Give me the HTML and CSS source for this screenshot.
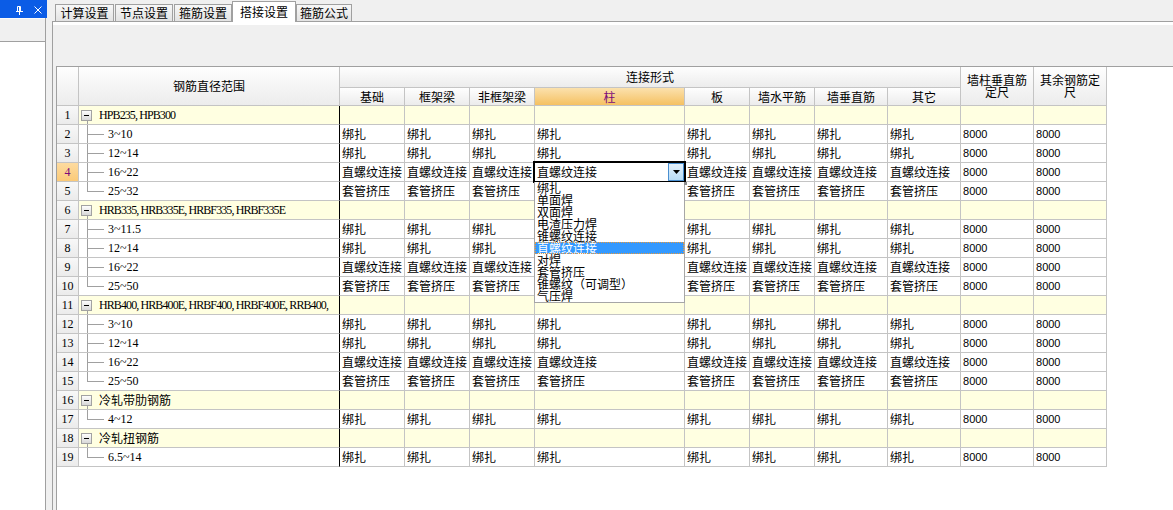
FILE: index.html
```html
<!DOCTYPE html>
<html lang="zh-CN">
<head>
<meta charset="utf-8">
<title>搭接设置</title>
<link rel="stylesheet" href="styles.css">
</head>
<body>
<div class="app">
  <aside class="side">
    <div class="side-title">
      <svg class="pin" width="9" height="9" viewBox="0 0 9 9"><path d="M2.5 0.5h3v5h-3z M1 5.5h7 M4.5 6v3" fill="none" stroke="#fff" stroke-width="1"/><path d="M4.5 1v4" stroke="#fff" stroke-width="1"/></svg>
      <svg class="close" width="8" height="8" viewBox="0 0 8 8"><path d="M0.5 0.5l7 7M7.5 0.5l-7 7" stroke="#fff" stroke-width="1"/></svg>
    </div>
    <div class="side-rest">
      <div class="side-tool"></div>
      <div class="side-body"></div>
    </div>
  </aside>
  <main class="main">
    <nav class="tabs">
      <div class="tab t1">计算设置</div>
      <div class="tab t2">节点设置</div>
      <div class="tab t3">箍筋设置</div>
      <div class="tab active">搭接设置</div>
      <div class="tab t5">箍筋公式</div>
    </nav>
    <section class="panel">
      <div class="panel-strip"></div>
      <div class="toolbar"></div>
      <div class="grid-wrap">
        <table class="grid">
          <colgroup>
            <col style="width:22px"><col style="width:261px">
            <col style="width:65px"><col style="width:65px"><col style="width:65px"><col style="width:150px">
            <col style="width:65px"><col style="width:65px"><col style="width:73px"><col style="width:73px">
            <col style="width:73px"><col style="width:73px">
          </colgroup>
          <thead>
            <tr class="h1">
              <th rowspan="2"></th>
              <th rowspan="2">钢筋直径范围</th>
              <th colspan="8">连接形式</th>
              <th rowspan="2" class="wrap">墙柱垂直筋定尺</th>
              <th rowspan="2" class="wrap">其余钢筋定尺</th>
            </tr>
            <tr class="h2">
              <th>基础</th><th>框架梁</th><th>非框架梁</th><th class="hot">柱</th><th>板</th><th>墙水平筋</th><th>墙垂直筋</th><th>其它</th>
            </tr>
          </thead>
          <tbody>
            <tr class="group"><td class="num">1</td><td class="tree"><div class="node"><svg class="minus" width="11" height="11" viewBox="0 0 11 11"><defs><linearGradient id="g" x1="0" y1="0" x2="0" y2="1"><stop offset="0" stop-color="#ffffff"/><stop offset="1" stop-color="#d6d6d6"/></linearGradient></defs><rect x="0.5" y="0.5" width="10" height="10" fill="url(#g)" stroke="#a2a2a2"/><path d="M3 5.5h5" stroke="#000"/></svg><span class="latin">HPB235, HPB300</span></div></td><td></td><td></td><td></td><td></td><td></td><td></td><td></td><td></td><td></td><td></td></tr>
            <tr><td class="num">2</td><td class="tree leaf"><span class="lbl">3~10</span></td><td>绑扎</td><td>绑扎</td><td>绑扎</td><td>绑扎</td><td>绑扎</td><td>绑扎</td><td>绑扎</td><td>绑扎</td><td class="n">8000</td><td class="n">8000</td></tr>
            <tr><td class="num">3</td><td class="tree leaf"><span class="lbl">12~14</span></td><td>绑扎</td><td>绑扎</td><td>绑扎</td><td>绑扎</td><td>绑扎</td><td>绑扎</td><td>绑扎</td><td>绑扎</td><td class="n">8000</td><td class="n">8000</td></tr>
            <tr><td class="num cur">4</td><td class="tree leaf"><span class="lbl">16~22</span></td><td>直螺纹连接</td><td>直螺纹连接</td><td>直螺纹连接</td>
              <td class="edit">
                <div class="dropdown">
                  <div class="opt">绑扎</div>
                  <div class="opt">单面焊</div>
                  <div class="opt">双面焊</div>
                  <div class="opt">电渣压力焊</div>
                  <div class="opt">锥螺纹连接</div>
                  <div class="opt sel">直螺纹连接</div>
                  <div class="opt">对焊</div>
                  <div class="opt">套管挤压</div>
                  <div class="opt">锥螺纹（可调型）</div>
                  <div class="opt">气压焊</div>
                </div>
                <div class="editor"><span class="ev">直螺纹连接</span><span class="dd-btn"><svg width="7" height="4" viewBox="0 0 7 4"><path d="M0 0h7L3.5 4z" fill="#000"/></svg></span></div>
              </td>
              <td>直螺纹连接</td><td>直螺纹连接</td><td>直螺纹连接</td><td>直螺纹连接</td><td class="n">8000</td><td class="n">8000</td></tr>
            <tr><td class="num">5</td><td class="tree leaf last"><span class="lbl">25~32</span></td><td>套管挤压</td><td>套管挤压</td><td>套管挤压</td><td>套管挤压</td><td>套管挤压</td><td>套管挤压</td><td>套管挤压</td><td>套管挤压</td><td class="n">8000</td><td class="n">8000</td></tr>
            <tr class="group"><td class="num">6</td><td class="tree"><div class="node"><svg class="minus" width="11" height="11" viewBox="0 0 11 11"><rect x="0.5" y="0.5" width="10" height="10" fill="url(#g)" stroke="#a2a2a2"/><path d="M3 5.5h5" stroke="#000"/></svg><span class="latin">HRB335, HRB335E, HRBF335, HRBF335E</span></div></td><td></td><td></td><td></td><td></td><td></td><td></td><td></td><td></td><td></td><td></td></tr>
            <tr><td class="num">7</td><td class="tree leaf"><span class="lbl">3~11.5</span></td><td>绑扎</td><td>绑扎</td><td>绑扎</td><td>绑扎</td><td>绑扎</td><td>绑扎</td><td>绑扎</td><td>绑扎</td><td class="n">8000</td><td class="n">8000</td></tr>
            <tr><td class="num">8</td><td class="tree leaf"><span class="lbl">12~14</span></td><td>绑扎</td><td>绑扎</td><td>绑扎</td><td>绑扎</td><td>绑扎</td><td>绑扎</td><td>绑扎</td><td>绑扎</td><td class="n">8000</td><td class="n">8000</td></tr>
            <tr><td class="num">9</td><td class="tree leaf"><span class="lbl">16~22</span></td><td>直螺纹连接</td><td>直螺纹连接</td><td>直螺纹连接</td><td>直螺纹连接</td><td>直螺纹连接</td><td>直螺纹连接</td><td>直螺纹连接</td><td>直螺纹连接</td><td class="n">8000</td><td class="n">8000</td></tr>
            <tr><td class="num">10</td><td class="tree leaf last"><span class="lbl">25~50</span></td><td>套管挤压</td><td>套管挤压</td><td>套管挤压</td><td>套管挤压</td><td>套管挤压</td><td>套管挤压</td><td>套管挤压</td><td>套管挤压</td><td class="n">8000</td><td class="n">8000</td></tr>
            <tr class="group"><td class="num">11</td><td class="tree"><div class="node"><svg class="minus" width="11" height="11" viewBox="0 0 11 11"><rect x="0.5" y="0.5" width="10" height="10" fill="url(#g)" stroke="#a2a2a2"/><path d="M3 5.5h5" stroke="#000"/></svg><span class="latin">HRB400, HRB400E, HRBF400, HRBF400E, RRB400,</span></div></td><td></td><td></td><td></td><td></td><td></td><td></td><td></td><td></td><td></td><td></td></tr>
            <tr><td class="num">12</td><td class="tree leaf"><span class="lbl">3~10</span></td><td>绑扎</td><td>绑扎</td><td>绑扎</td><td>绑扎</td><td>绑扎</td><td>绑扎</td><td>绑扎</td><td>绑扎</td><td class="n">8000</td><td class="n">8000</td></tr>
            <tr><td class="num">13</td><td class="tree leaf"><span class="lbl">12~14</span></td><td>绑扎</td><td>绑扎</td><td>绑扎</td><td>绑扎</td><td>绑扎</td><td>绑扎</td><td>绑扎</td><td>绑扎</td><td class="n">8000</td><td class="n">8000</td></tr>
            <tr><td class="num">14</td><td class="tree leaf"><span class="lbl">16~22</span></td><td>直螺纹连接</td><td>直螺纹连接</td><td>直螺纹连接</td><td>直螺纹连接</td><td>直螺纹连接</td><td>直螺纹连接</td><td>直螺纹连接</td><td>直螺纹连接</td><td class="n">8000</td><td class="n">8000</td></tr>
            <tr><td class="num">15</td><td class="tree leaf last"><span class="lbl">25~50</span></td><td>套管挤压</td><td>套管挤压</td><td>套管挤压</td><td>套管挤压</td><td>套管挤压</td><td>套管挤压</td><td>套管挤压</td><td>套管挤压</td><td class="n">8000</td><td class="n">8000</td></tr>
            <tr class="group"><td class="num">16</td><td class="tree"><div class="node"><svg class="minus" width="11" height="11" viewBox="0 0 11 11"><rect x="0.5" y="0.5" width="10" height="10" fill="url(#g)" stroke="#a2a2a2"/><path d="M3 5.5h5" stroke="#000"/></svg><span>冷轧带肋钢筋</span></div></td><td></td><td></td><td></td><td></td><td></td><td></td><td></td><td></td><td></td><td></td></tr>
            <tr><td class="num">17</td><td class="tree leaf last"><span class="lbl">4~12</span></td><td>绑扎</td><td>绑扎</td><td>绑扎</td><td>绑扎</td><td>绑扎</td><td>绑扎</td><td>绑扎</td><td>绑扎</td><td class="n">8000</td><td class="n">8000</td></tr>
            <tr class="group"><td class="num">18</td><td class="tree"><div class="node"><svg class="minus" width="11" height="11" viewBox="0 0 11 11"><rect x="0.5" y="0.5" width="10" height="10" fill="url(#g)" stroke="#a2a2a2"/><path d="M3 5.5h5" stroke="#000"/></svg><span>冷轧扭钢筋</span></div></td><td></td><td></td><td></td><td></td><td></td><td></td><td></td><td></td><td></td><td></td></tr>
            <tr><td class="num">19</td><td class="tree leaf last"><span class="lbl">6.5~14</span></td><td>绑扎</td><td>绑扎</td><td>绑扎</td><td>绑扎</td><td>绑扎</td><td>绑扎</td><td>绑扎</td><td>绑扎</td><td class="n">8000</td><td class="n">8000</td></tr>
          </tbody>
        </table>
      </div>
    </section>
  </main>
</div>
</body>
</html>
```
FILE: styles.css
```css
* { box-sizing: border-box; }
html, body { margin: 0; padding: 0; }
body {
  width: 1173px;
  height: 510px;
  overflow: hidden;
  background: #f0f0f0;
  font-family: "Noto Sans CJK SC", "Noto Sans", sans-serif;
  font-size: 12px;
  color: #000;
}
.app { display: flex; height: 510px; }

/* left docked panel */
.side { width: 47px; flex: none; display: flex; flex-direction: column; }
.side-title {
  height: 18px;
  background: #0b5ce6;
  display: flex;
  align-items: flex-end;
  padding: 0 5px 3px 0;
  justify-content: flex-end;
}
.side-title .pin { margin-right: 10px; }
.side-title .close { margin-bottom: 1px; }
.side-rest {
  flex: 1;
  width: 46px;
  display: flex;
  flex-direction: column;
  border-right: 1px solid #a0a0a0;
}
.side-tool { height: 24px; background: #f0f0f0; border-bottom: 1px solid #a0a0a0; border-top: 1px solid #fbfbfb; }
.side-body { flex: 1; background: #fff; }

/* main area */
.main { flex: 1; margin-left: 5px; display: flex; flex-direction: column; min-width: 0; }
.tabs {
  height: 21px;
  display: flex;
  align-items: flex-end;
  padding-left: 3px;
  position: relative;
  z-index: 1;
}
.tab {
  height: 17px;
  border: 1px solid #a0a0a0;
  border-bottom: none;
  background: linear-gradient(#f7f7f7, #e3e3e3);
  display: flex;
  align-items: center;
  justify-content: center;
  line-height: 12px;
  flex: none;
}
.t1 { width: 59px; margin-right: 1px; }
.t2 { width: 58px; margin-right: 1px; }
.t3 { width: 58px; }
.t5 { width: 56px; }
.tab.active {
  width: 64px;
  height: 21px;
  margin-bottom: -1px;
  background: #fff;
  padding-bottom: 1px;
}

.panel {
  flex: 1;
  display: flex;
  flex-direction: column;
  border-top: 1px solid #a0a0a0;
  border-left: 1px solid #a0a0a0;
  background: #f0f0f0;
  min-height: 0;
}
.panel-strip { height: 3px; background: #fff; }
.toolbar { height: 41px; background: #f0f0f0; }
.grid-wrap {
  flex: 1;
  margin-left: 3px;
  background: #fff;
  border-top: 1px solid #a0a0a0;
  border-left: 1px solid #a0a0a0;
}

/* grid */
.grid {
  border-collapse: separate;
  border-spacing: 0;
  table-layout: fixed;
  width: 1050px;
}
.grid th, .grid td {
  border-right: 1px solid #c4c4c4;
  border-bottom: 1px solid #c4c4c4;
  padding: 0;
  font-weight: normal;
  white-space: nowrap;
  overflow: hidden;
}
.grid th {
  background: linear-gradient(#fefefe, #ececec);
  text-align: center;
  vertical-align: middle;
  line-height: 12px;
}
.grid th.wrap { white-space: normal; padding: 0 5px; }
.grid th.hot { background: linear-gradient(#fbe1ad, #f5c162); color: #7a0a7a; }
.h1 { height: 21px; }
.h2 { height: 18px; }
.grid tbody tr { height: 19px; }
.grid td { height: 19px; line-height: 18px; padding-left: 2px; text-align: left; vertical-align: middle; }
.grid td.n { font-family: "Liberation Sans", Arial, sans-serif; font-size: 11px; }
.grid td.num {
  padding: 0;
  text-align: center;
  background: linear-gradient(#f8f8f8, #ebebeb);
  font-family: "Liberation Serif", serif;
  font-size: 12px;
}
.grid td.num.cur { background: linear-gradient(#fddba0, #fbca78); color: #7a0a7a; }
.grid tr.group td { background: #ffffe1; }
.grid tr.group td.num { background: linear-gradient(#f8f8f8, #ebebeb); }
.grid td.tree { border-right: 1px solid #000; padding: 0; }

.node {
  display: flex;
  align-items: center;
  height: 18px;
  overflow: hidden;
  padding-left: 2px;
  background: linear-gradient(#a0a0a0, #a0a0a0) no-repeat 8px 15px / 1px 3px;
}
.node .minus { margin-right: 7px; flex: none; }
.latin { font-family: "Liberation Serif", serif; letter-spacing: -0.9px; line-height: 18px; }
.leaf {
  background:
    linear-gradient(#a0a0a0, #a0a0a0) no-repeat 8px 0 / 1px 100%,
    linear-gradient(#a0a0a0, #a0a0a0) no-repeat 8px 9px / 17px 1px;
}
.grid tr td.leaf.last {
  background:
    linear-gradient(#a0a0a0, #a0a0a0) no-repeat 8px 0 / 1px 10px,
    linear-gradient(#a0a0a0, #a0a0a0) no-repeat 8px 9px / 17px 1px;
}
.lbl {
  display: block;
  height: 18px;
  line-height: 18px;
  overflow: hidden;
  padding-left: 29px;
  font-family: "Liberation Serif", serif;
}

/* in-cell editor with open dropdown */
.grid td.edit { position: relative; overflow: visible; padding: 0; }
.editor {
  position: absolute;
  left: -2px;
  top: -2px;
  width: 153px;
  height: 22px;
  border: 2px solid #000;
  background: #fff;
  display: flex;
  align-items: center;
  padding-left: 2px;
}
.ev { flex: 1; line-height: 18px; }
.dd-btn {
  width: 16px;
  height: 18px;
  margin-right: 0;
  border: 1px solid #4a8fd0;
  background: linear-gradient(#e3f1fc, #b9dcf6);
  display: flex;
  align-items: center;
  justify-content: center;
}
.dropdown {
  position: absolute;
  left: -1px;
  top: 19px;
  width: 151px;
  background: #fff;
  border: 1px solid #a6a6a6;
  border-top: none;
  z-index: 2;
}
.dropdown::after {
  content: "";
  position: absolute;
  right: -3px;
  top: 0;
  width: 3px;
  height: 3px;
  background: #8c8c8c;
}
.opt { height: 12px; line-height: 12px; padding-left: 2px; white-space: nowrap; }
.opt.sel { background: #3399ff; color: #fff; outline: 1px dotted #e89a3c; outline-offset: -1px; }
```
